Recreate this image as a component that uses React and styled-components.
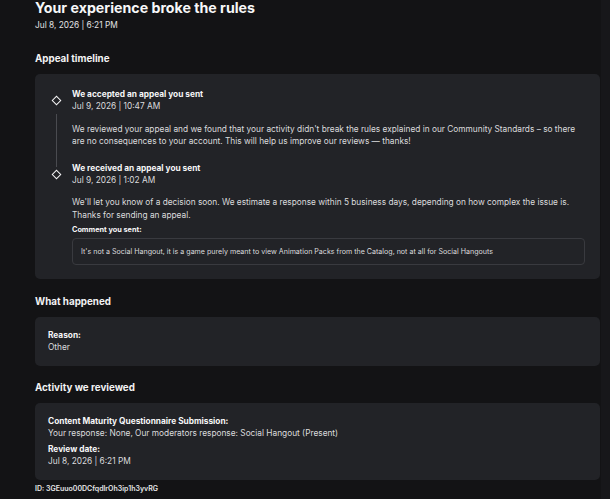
import React from "react";
import styled, { createGlobalStyle } from "styled-components";

const Global = createGlobalStyle`
  html, body { margin: 0; padding: 0; background: #131315; }
  body { font-family: Inter, "Noto Sans", sans-serif; color: #e6e6e8; -webkit-font-smoothing: antialiased; }
  * { box-sizing: border-box; }
`;

const Page = styled.div`
  display: flex;
  width: 610px;
  height: 499px;
  overflow: hidden;
  background: #131315;
`;

const Main = styled.main`
  flex: 1;
  padding: 0 0 0 35px;
  display: flex;
  flex-direction: column;
`;

const ScrollTrack = styled.div`
  width: 9px;
  background: #17171a;
`;

const Title = styled.h1`
  margin: -1px 0 0;
  font-size: 14.2px;
  line-height: 18px;
  font-weight: 700;
  color: #f7f7f8;
`;

const SubDate = styled.div`
  margin-top: 2px;
  font-size: 8.3px;
  line-height: 12px;
  color: #e2e2e4;
`;

const SectionHeading = styled.h2`
  margin: ${(p) => p.$top}px 0 7.5px;
  font-size: 9.8px;
  line-height: 14px;
  font-weight: 700;
  color: #f2f2f3;
`;

const Card = styled.section`
  width: 565px;
  background: #222327;
  border-radius: 5px;
  padding: ${(p) => p.$pad};
  display: flex;
  flex-direction: column;
`;

const Item = styled.div`
  display: flex;
`;

const Rail = styled.div`
  width: 10px;
  margin-right: 11px;
  display: flex;
  flex-direction: column;
  align-items: center;
`;

const DiamondSlot = styled.div`
  height: 25px;
  display: flex;
  align-items: center;
  justify-content: center;
`;

const Diamond = styled.div`
  width: 7px;
  height: 7px;
  border: 1.3px solid #f4f4f5;
  transform: rotate(45deg);
`;

const Line = styled.div`
  flex: 1;
  width: 1px;
  background: #4a4b50;
  margin: 1px 0 -5px;
`;

const ItemBody = styled.div`
  flex: 1;
  display: flex;
  flex-direction: column;
  padding-bottom: ${(p) => (p.$last ? 0 : 14)}px;
`;

const Strong = styled.div`
  font-size: ${(p) => p.$size || 8.3}px;
  line-height: ${(p) => p.$lh || 12}px;
  font-weight: 700;
  color: #f6f6f7;
  margin-top: ${(p) => p.$top || 0}px;
`;

const Text = styled.div`
  font-size: 8.3px;
  line-height: ${(p) => p.$lh || 12}px;
  color: #dcdcde;
`;

const Paragraph = styled.p`
  margin: ${(p) => p.$top}px 0 0;
  font-size: 8.3px;
  line-height: 12.7px;
  color: #dcdcde;
`;

const CommentBox = styled.div`
  margin-top: 3px;
  border: 1px solid #393a3f;
  border-radius: 4px;
  background: #222327;
  padding: 0 8px;
  height: 27px;
  display: flex;
  align-items: center;
  font-size: 7.1px;
  color: #dcdcde;
`;

const Field = styled.div`
  display: flex;
  flex-direction: column;
  margin-top: ${(p) => p.$top || 0}px;
`;

const Id = styled.div`
  margin-top: 3px;
  font-size: 7px;
  line-height: 11px;
  font-weight: 600;
  color: #e6e6e8;
`;

export default function App() {
  return (
    <>
      <Global />
      <Page>
        <Main>
          <Title>Your experience broke the rules</Title>
          <SubDate>Jul 8, 2026 | 6:21 PM</SubDate>

          <SectionHeading $top={21}>Appeal timeline</SectionHeading>
          <Card $pad="14px 15px 14px 16px">
            <Item>
              <Rail>
                <DiamondSlot><Diamond /></DiamondSlot>
                <Line />
              </Rail>
              <ItemBody>
                <Strong $lh={12.5}>We accepted an appeal you sent</Strong>
                <Text $lh={12.5}>Jul 9, 2026 | 10:47 AM</Text>
                <Paragraph $top={10}>
                  We reviewed your appeal and we found that your activity didn't break the rules explained in our Community Standards – so there are no consequences to your account. This will help us improve our reviews — thanks!
                </Paragraph>
              </ItemBody>
            </Item>
            <Item>
              <Rail>
                <DiamondSlot><Diamond /></DiamondSlot>
              </Rail>
              <ItemBody $last>
                <Strong $lh={12.5}>We received an appeal you sent</Strong>
                <Text $lh={12.5}>Jul 9, 2026 | 1:02 AM</Text>
                <Paragraph $top={9}>
                  We'll let you know of a decision soon. We estimate a response within 5 business days, depending on how complex the issue is. Thanks for sending an appeal.
                </Paragraph>
                <Strong $size={7.3} $lh={11} $top={3}>Comment you sent:</Strong>
                <CommentBox>
                  It's not a Social Hangout, it is a game purely meant to view Animation Packs from the Catalog, not at all for Social Hangouts
                </CommentBox>
              </ItemBody>
            </Item>
          </Card>

          <SectionHeading $top={16}>What happened</SectionHeading>
          <Card $pad="12px 13px 13px">
            <Field>
              <Strong>Reason:</Strong>
              <Text>Other</Text>
            </Field>
          </Card>

          <SectionHeading $top={15.5}>Activity we reviewed</SectionHeading>
          <Card $pad="12px 13px 13px">
            <Field>
              <Strong>Content Maturity Questionnaire Submission:</Strong>
              <Text>Your response: None, Our moderators response: Social Hangout (Present)</Text>
            </Field>
            <Field $top={4.5}>
              <Strong>Review date:</Strong>
              <Text>Jul 8, 2026 | 6:21 PM</Text>
            </Field>
          </Card>
          <Id>ID: 3GEuuo00DCfqdlrOh3ip1h3yvRG</Id>
        </Main>
        <ScrollTrack />
      </Page>
    </>
  );
}
